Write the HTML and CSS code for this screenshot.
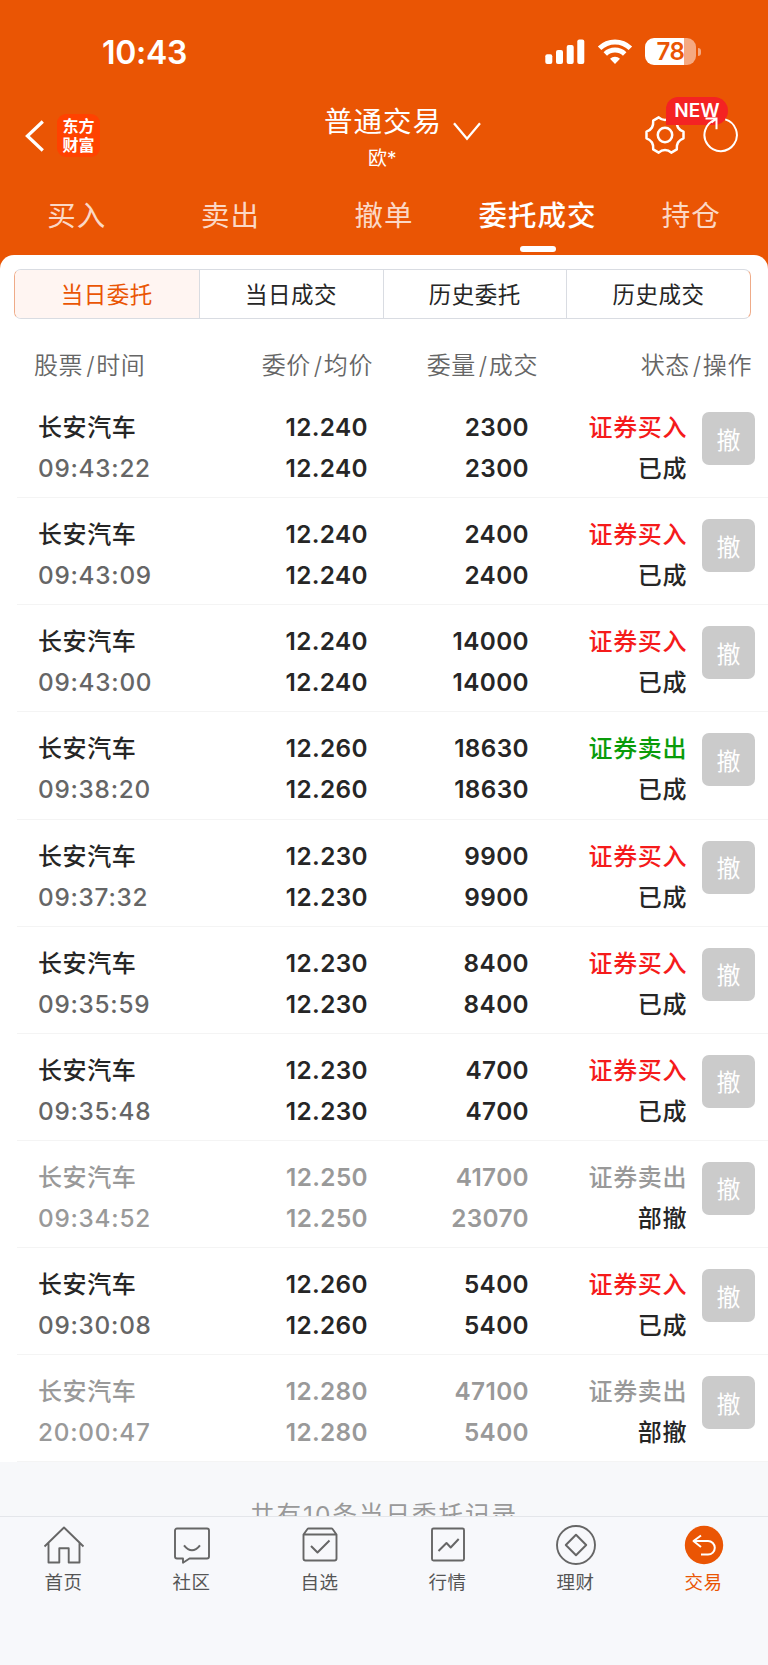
FILE: index.html
```html
<!DOCTYPE html>
<html lang="zh-CN">
<head>
<meta charset="utf-8">
<title>普通交易</title>
<link rel="stylesheet" href="styles.css">
</head>
<body>
<div class="app">
<header class="top">
  <div class="status">
    <span class="clock">10:43</span>
    <div class="indicators">
      <svg class="signal" width="40" height="26" viewBox="0 0 40 26" fill="#fff"><rect x="0.3" y="15.2" width="7" height="9.8" rx="2"/><rect x="11" y="11" width="7" height="14" rx="2"/><rect x="21.7" y="6" width="7" height="19" rx="2"/><rect x="32.3" y="0.4" width="7" height="24.6" rx="2"/></svg>
      <svg class="wifi" width="36" height="26" viewBox="0 0 36 26" fill="none" stroke="#fff" stroke-width="5"><path d="M2.6 9.200A22 22 0 0 1 33.400 9.200"/><path d="M8.300 15A14 14 0 0 1 27.700 15"/><path d="M18 25l-5-5.200a7.200 7.200 0 0 1 10 0z" fill="#fff" stroke="none"/></svg>
      <div class="battery"><span class="level">78</span><i class="cap"></i></div>
    </div>
  </div>
  <div class="titlebar">
    <div class="side">
      <svg class="back" width="20" height="32" viewBox="0 0 20 32" fill="none" stroke="#fff" stroke-width="3.200"><path d="M17.800 1.500L2.400 16l15.400 14.500"/></svg>
      <div class="logo"><span>东方</span><span>财富</span></div>
    </div>
    <div class="heading">
      <div class="title">普通交易<svg class="chev" width="28" height="19" viewBox="0 0 28 19" fill="none" stroke="#fff" stroke-width="2.300"><path d="M1 1.200l13 15.500L27 1.200"/></svg></div>
      <div class="user">欧*</div>
    </div>
    <div class="tools">
      <svg class="gear" width="42" height="42" viewBox="-21 -21 42 42" fill="none" stroke="#fff" stroke-width="2.500" stroke-linejoin="round"><circle r="7.200"/><path d="M-6.300 -17.600C-4.200 -15.600 -2 -15 0 -15S4.200 -15.600 6.300 -17.600L11.800 -14.400C11.600 -11.400 11.800 -9.500 13 -7.500S15.700 -4.400 18.500 -3.300V3.300C15.700 4.400 14.200 5.500 13 7.500S11.600 11.400 11.800 14.400L6.300 17.600C4.200 15.600 2 15 0 15S-4.200 15.600 -6.300 17.600L-11.800 14.400C-11.600 11.400 -11.800 9.500 -13 7.500S-15.700 4.400 -18.500 3.300V-3.300C-15.700 -4.400 -14.200 -5.500 -13 -7.500S-11.600 -11.400 -11.800 -14.400Z"/></svg>
      <span class="badge">NEW</span>
      <svg class="reload" width="38" height="38" viewBox="0 0 38 38" fill="none" stroke="#fff" stroke-width="2"><path d="M23.200 4.400A16.200 16.200 0 1 1 13.500 4.600M3.500 3.500H14.500V14.200M14.500 3.500L9.500 7.500"/></svg>
    </div>
  </div>
  <nav class="tabs"><span>买入</span><span>卖出</span><span>撤单</span><span class="on">委托成交</span><span>持仓</span></nav>
</header>
<main class="sheet">
  <div class="segment"><span class="on">当日委托</span><span>当日成交</span><span>历史委托</span><span>历史成交</span></div>
  <div class="cols head"><span>股票<i>/</i>时间</span><span>委价<i>/</i>均价</span><span>委量<i>/</i>成交</span><span>状态<i>/</i>操作</span></div>
  <div class="list">
    <div class="cols row"><p><b>长安汽车</b><time>09:43:22</time></p><p>12.240<br>12.240</p><p>2300<br>2300</p><p><b class="buy">证券买入</b><b>已成</b></p><button>撤</button></div>
    <div class="cols row"><p><b>长安汽车</b><time>09:43:09</time></p><p>12.240<br>12.240</p><p>2400<br>2400</p><p><b class="buy">证券买入</b><b>已成</b></p><button>撤</button></div>
    <div class="cols row"><p><b>长安汽车</b><time>09:43:00</time></p><p>12.240<br>12.240</p><p>14000<br>14000</p><p><b class="buy">证券买入</b><b>已成</b></p><button>撤</button></div>
    <div class="cols row"><p><b>长安汽车</b><time>09:38:20</time></p><p>12.260<br>12.260</p><p>18630<br>18630</p><p><b class="sell">证券卖出</b><b>已成</b></p><button>撤</button></div>
    <div class="cols row"><p><b>长安汽车</b><time>09:37:32</time></p><p>12.230<br>12.230</p><p>9900<br>9900</p><p><b class="buy">证券买入</b><b>已成</b></p><button>撤</button></div>
    <div class="cols row"><p><b>长安汽车</b><time>09:35:59</time></p><p>12.230<br>12.230</p><p>8400<br>8400</p><p><b class="buy">证券买入</b><b>已成</b></p><button>撤</button></div>
    <div class="cols row"><p><b>长安汽车</b><time>09:35:48</time></p><p>12.230<br>12.230</p><p>4700<br>4700</p><p><b class="buy">证券买入</b><b>已成</b></p><button>撤</button></div>
    <div class="cols row off"><p><b>长安汽车</b><time>09:34:52</time></p><p>12.250<br>12.250</p><p>41700<br>23070</p><p><b>证券卖出</b><b class="state">部撤</b></p><button>撤</button></div>
    <div class="cols row"><p><b>长安汽车</b><time>09:30:08</time></p><p>12.260<br>12.260</p><p>5400<br>5400</p><p><b class="buy">证券买入</b><b>已成</b></p><button>撤</button></div>
    <div class="cols row off"><p><b>长安汽车</b><time>20:00:47</time></p><p>12.280<br>12.280</p><p>47100<br>5400</p><p><b>证券卖出</b><b class="state">部撤</b></p><button>撤</button></div>
  </div>
</main>
<div class="summary">共有10条当日委托记录</div>
<nav class="dock">
  <a><svg viewBox="0 0 42 42"><path d="M1.500 21.500L21 2.500l19.500 19M5.500 18v19.500h10.800V23.200h9.400v14.300h10.800V18"/></svg>首页</a>
  <a><svg viewBox="0 0 42 42"><path d="M6 3.500h30a2 2 0 0 1 2 2v26a2 2 0 0 1-2 2H18.500l-6.500 4.300v-4.300H6a2 2 0 0 1-2-2v-26a2 2 0 0 1 2-2z"/><path stroke-width="2" d="M13 20.300q8 10 16 0"/></svg>社区</a>
  <a><svg viewBox="0 0 42 42"><path d="M4.500 9.500V33.500a2 2 0 0 0 2 2h29a2 2 0 0 0 2-2V9.500L33.500 4q-.4-.5-1-.5H9.500q-.6 0-1 .5zM4.500 9.500h33"/><path stroke-width="2" d="M12 21l6.500 6.500L30.500 15.500"/></svg>自选</a>
  <a><svg viewBox="0 0 42 42"><rect x="5" y="3.500" width="32" height="32" rx="1.500"/><path stroke-width="2" d="M11.500 26l8-8 4.200 4.500 8-8.500"/></svg>行情</a>
  <a><svg viewBox="0 0 42 42"><circle cx="21" cy="20" r="19"/><path stroke-width="2" d="M21 9.800L31.200 20 21 30.200 10.800 20z"/></svg>理财</a>
  <a class="on"><svg viewBox="0 0 42 42"><circle cx="21" cy="20" r="19.200" fill="#ea5504" stroke="none"/><path stroke="#fff" stroke-width="2" d="M18 10.500L10.500 16l7.500 6M10.500 16H25a6.800 6.800 0 0 1 0 13.600H18"/></svg>交易</a>
</nav>
</div>
</body>
</html>
```
FILE: styles.css
```css
* { box-sizing: border-box; }
body {
  margin: 0;
  background: #f7f8fa;
  font-family: Inter, "Noto Sans CJK SC", sans-serif;
  color: #262626;
}
p { margin: 0; }
.app {
  width: 768px;
  height: 1665px;
  display: flex;
  flex-direction: column;
  overflow: hidden;
}

/* header */
.top {
  height: 270px;
  flex: none;
  background: #ea5504;
  color: #fff;
}
.status {
  height: 104px;
  display: flex;
  justify-content: space-between;
  padding: 0 67px 0 102px;
}
.clock {
  font-size: 32px;
  font-weight: 600;
  letter-spacing: -.3px;
  line-height: 106px;
}
.indicators { display: flex; padding-top: 38px; }
.signal { margin: 1px 12px 0 0; }
.wifi { margin: 1px 12px 0 0; }
.battery {
  display: flex;
  align-items: center;
  height: 27px;
}
.level {
  width: 51px;
  height: 27px;
  border-radius: 9px;
  background: linear-gradient(90deg, #fff 39px, #f5a981 39px);
  color: #ea5504;
  font-size: 24px;
  font-weight: 600;
  letter-spacing: -.4px;
  line-height: 28px;
  text-align: center;
}
.cap {
  width: 3px;
  height: 8px;
  margin-left: 2px;
  border-radius: 0 4px 4px 0;
  background: #f5a981;
}
.titlebar {
  height: 74px;
  display: grid;
  grid-template-columns: 260px 1fr 260px;
}
.side { display: flex; padding: 10px 0 0 25px; }
.back { margin: 6px 12px 0 0; }
.logo {
  width: 43px;
  height: 43px;
  padding-top: 2px;
  border-radius: 9px;
  background: #ff4200;
  font-family: "Noto Sans CJK SC", sans-serif;
  font-size: 16px;
  font-weight: 700;
  line-height: 19px;
  text-align: center;
}
.logo span { display: block; }
.title {
  height: 36px;
  display: flex;
  padding-left: 64px;
  font-size: 28.500px;
  letter-spacing: 1px;
  line-height: 35px;
  white-space: nowrap;
}
.chev { margin: 18px 0 0 11px; }
.user {
  padding-left: 108px;
  font-size: 19px;
  line-height: 38px;
}
.tools { position: relative; }
.gear { position: absolute; left: 136px; top: 10px; }
.badge {
  position: absolute;
  left: 158px;
  top: -7px;
  width: 62px;
  height: 28px;
  border-radius: 12px 14px 14px 0;
  background: #f42323;
  font-size: 19px;
  font-weight: 600;
  line-height: 28px;
  text-align: center;
}
.reload { position: absolute; left: 194px; top: 11px; }
.tabs {
  display: grid;
  grid-template-columns: repeat(5, 1fr);
  font-size: 28.500px;
  letter-spacing: 1px;
  line-height: 76px;
  text-align: center;
  color: #fbd8c6;
}
.tabs .on {
  height: 74px;
  color: #fff;
  font-weight: 500;
}
.tabs .on::after {
  content: "";
  display: block;
  width: 36px;
  height: 6px;
  margin: -8px auto 0;
  border-radius: 3px;
  background: #fff;
}

/* order list */
.sheet {
  height: 1207px;
  flex: none;
  margin-top: -15px;
  padding-top: 14px;
  border-radius: 14px 14px 0 0;
  background: #fff;
}
.segment {
  display: grid;
  grid-template-columns: repeat(4, 1fr);
  width: 737px;
  height: 50px;
  margin-left: 14px;
  border: 1px solid #d9dce2;
  border-left-color: #efab88;
  border-right-color: #efab88;
  border-radius: 7px;
  overflow: hidden;
  font-size: 22.500px;
  letter-spacing: .5px;
  line-height: 49px;
  text-align: center;
}
.segment span + span { border-left: 1px solid #d9dce2; }
.segment .on { background: #fff5f2; color: #ea5504; }
.cols { display: grid; }
.head {
  height: 72px;
  padding-left: 34px;
  grid-template-columns: 181px 158px 165px 214px;
  font-size: 24px;
  font-weight: 350;
  letter-spacing: .6px;
  line-height: 94px;
  text-align: right;
  color: #666;
}
.head span:first-child { text-align: left; }
.head i { padding: 0 1px 0 3px; font-style: normal; }
.row {
  height: 107.150px;
  margin-left: 17px;
  padding: 16px 0 0 21px;
  grid-template-columns: 170px 160px 161px 158px 69px;
  border-bottom: 1px solid #f4f4f4;
  font-size: 24.300px;
  font-weight: 600;
  letter-spacing: .4px;
  line-height: 41px;
  text-align: right;
}
.row p:first-child { text-align: left; }
.row b, .row time { display: block; }
.row b { font-size: 24px; font-weight: 500; letter-spacing: .6px; }
.row time { font-weight: 550; letter-spacing: .75px; color: #666; }
.row .buy { color: #f51b1b; }
.row .sell { color: #0a9c0a; }
.off, .row.off time { color: #999; }
.off .state { color: #262626; }
.row button {
  width: 53px;
  height: 53px;
  margin: 5px 0 0 15px;
  padding: 0;
  border: 0;
  border-radius: 7px;
  background: #cbcbcb;
  color: #fff;
  font: 24px/52px "Noto Sans CJK SC", sans-serif;
}

/* footer */
.summary {
  height: 54px;
  flex: none;
  overflow: hidden;
  font-size: 24.500px;
  letter-spacing: 2px;
  line-height: 106px;
  text-align: center;
  color: #999;
}
.dock {
  flex: 1;
  display: grid;
  grid-template-columns: repeat(6, 1fr);
  border-top: 1px solid #e4e6ea;
  background: #f7f8fb;
  font-size: 18.500px;
  letter-spacing: .5px;
  line-height: 30px;
  color: #555;
}
.dock a {
  display: flex;
  flex-direction: column;
  align-items: center;
  padding: 8px 1px 0 0;
}
.dock svg {
  width: 42px;
  height: 42px;
  fill: none;
  stroke: #666;
  stroke-width: 1.900;
  stroke-linejoin: round;
}
.dock .on { color: #ea5504; }
```
